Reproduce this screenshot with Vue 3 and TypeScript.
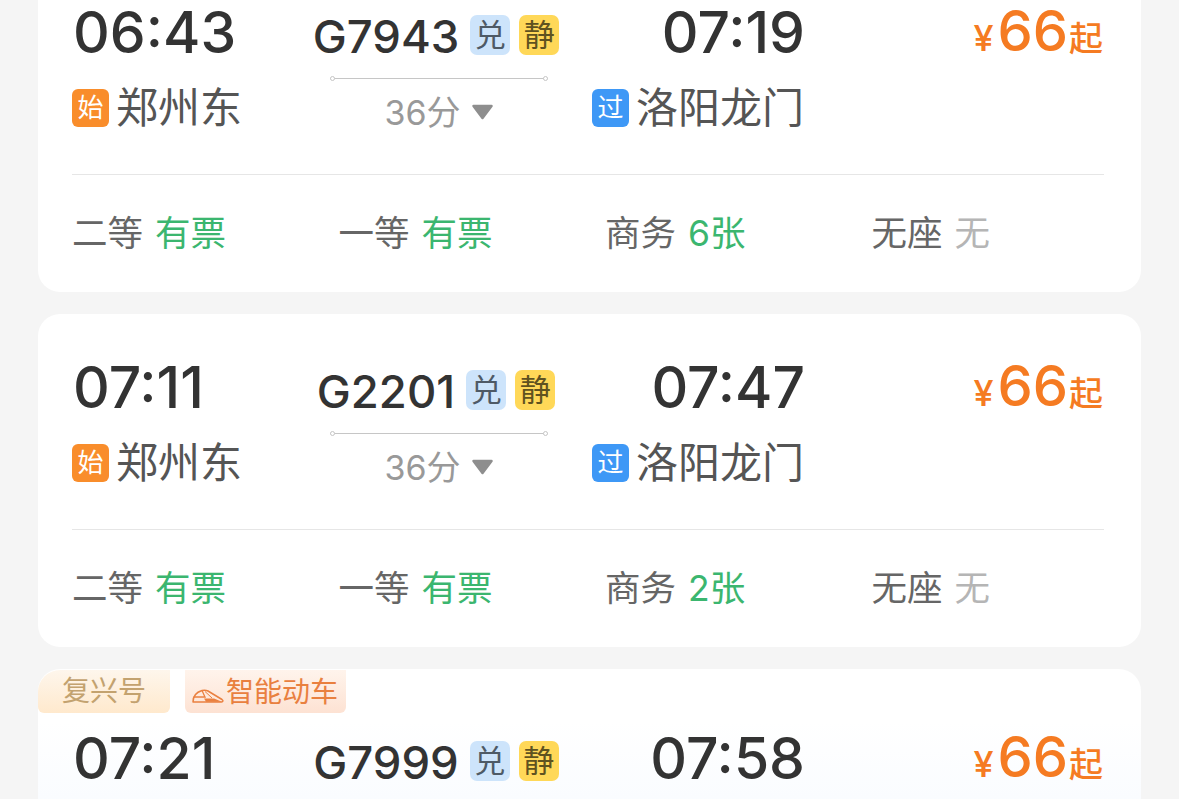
<script setup lang="ts">
interface Seat {
  label: string
  value: string
  none?: boolean
}

interface Train {
  code: string
  depart: string
  arrive: string
  seats: Seat[]
  fuxing?: boolean
}

const seatsWith = (shangwu: string): Seat[] => [
  { label: "二等", value: "有票" },
  { label: "一等", value: "有票" },
  { label: "商务", value: shangwu },
  { label: "无座", value: "无", none: true },
]

// the third card runs past the fold, only its top row is drawn
const trains: Train[] = [
  { code: "G7943", depart: "06:43", arrive: "07:19", seats: seatsWith("6张") },
  { code: "G2201", depart: "07:11", arrive: "07:47", seats: seatsWith("2张") },
  { code: "G7999", depart: "07:21", arrive: "07:58", seats: [], fuxing: true },
]
</script>

<template>
  <div class="page">
    <div class="list">
      <section v-for="t in trains" :key="t.code" class="card" :class="{ 'card--fuxing': t.fuxing }">
        <div v-if="t.fuxing" class="tags">
          <span class="tag-fx">复兴号</span>
          <span class="tag-smart">
            <svg width="32" height="14" viewBox="0 0 32 14" fill="none">
              <path d="M1 13C1 7 5 3 10 1.500C12 1 14 1 16 2L30 10.500C31.500 11.500 31 13 29.500 13Z" stroke="#ea8040" stroke-width="1.500" stroke-linejoin="round" />
              <path d="M1.500 8H13L10 1.500" stroke="#ea8040" stroke-width="1.300" />
              <path d="M13 2.500L20 9" stroke="#ea8040" stroke-width="1" />
              <path d="M12 9.500H22L30 12.800H14Z" fill="#ea8040" />
            </svg>
            智能动车
          </span>
        </div>
        <div class="main">
          <div class="col col-left">
            <div class="time">{{ t.depart }}</div>
            <div v-if="!t.fuxing" class="station">
              <span class="st-tag st-tag--start">始</span>郑州东
            </div>
          </div>
          <div class="col col-mid">
            <div class="train">
              <span class="code">{{ t.code }}</span>
              <span class="badge badge--blue">兑</span>
              <span class="badge badge--yellow">静</span>
            </div>
            <template v-if="!t.fuxing">
              <div class="track"></div>
              <div class="duration">
                36分
                <svg class="caret" width="23" height="16" viewBox="0 0 23 16">
                  <path d="M2.500 2H20.500L11.500 14Z" fill="#8e8e8e" stroke="#8e8e8e" stroke-width="2.500" stroke-linejoin="round" />
                </svg>
              </div>
            </template>
          </div>
          <div class="col col-right">
            <div class="time">{{ t.arrive }}</div>
            <div v-if="!t.fuxing" class="station">
              <span class="st-tag st-tag--pass">过</span>洛阳龙门
            </div>
          </div>
          <div class="price">
            <span class="yen">¥</span><span class="amount">66</span><span class="from">起</span>
          </div>
        </div>
        <div class="seats">
          <div v-for="s in t.seats" :key="s.label" class="seat">
            <span class="seat-label">{{ s.label }}</span>
            <span class="seat-value" :class="{ 'seat-value--none': s.none }">{{ s.value }}</span>
          </div>
        </div>
      </section>
    </div>
  </div>
</template>

<style scoped>
.page {
  height: 799px;
  overflow: hidden;
  background: #f5f5f5;
  font-family: Inter, "Noto Sans CJK SC", sans-serif;
}

.list {
  display: flex;
  flex-direction: column;
  gap: 22px;
  margin: -41px 38px 0;
}

.card {
  height: 333px;
  flex-shrink: 0;
  box-sizing: border-box;
  padding: 0 37px 0 34px;
  background: #fff;
  border-radius: 22px;
}

.card--fuxing {
  position: relative;
  height: 349px;
  padding-top: 16px;
  background: linear-gradient(180deg, #fff 15%, #f8fbff 45%);
}

.tags {
  position: absolute;
  top: 1px;
  left: 0;
  display: flex;
  gap: 15px;
  height: 43px;
  font-size: 28px;
  line-height: 42px;
}

.tag-fx {
  width: 132px;
  text-align: center;
  color: #c3a26f;
  background: linear-gradient(180deg, #fef6ec, #ffe9cd);
  border-radius: 22px 0 6px 6px;
}

.tag-smart {
  display: flex;
  align-items: center;
  gap: 2px;
  width: 161px;
  box-sizing: border-box;
  padding-left: 7px;
  color: #e9803f;
  background: linear-gradient(180deg, #fff4ec, #fde2d3);
  border-radius: 0 0 6px 6px;
}

.tag-smart svg {
  margin-top: 9px;
}

.main {
  display: grid;
  grid-template-columns: 239px 256px 237px 1fr;
  height: 216px;
  padding-top: 44px;
  box-sizing: border-box;
  border-bottom: 1px solid #e6e6e6;
}

.col {
  display: flex;
  flex-direction: column;
}

.col-right {
  align-items: flex-end;
}

.col-mid {
  align-items: center;
}

.time {
  font-size: 57px;
  font-weight: 450;
  line-height: 60px;
  color: #333;
  padding-left: 1px;
}

.col-right .time {
  margin-right: -1px;
}

.station {
  display: flex;
  align-items: center;
  gap: 7px;
  height: 50px;
  margin-top: 20px;
  font-size: 42px;
  line-height: 50px;
  color: #555;
}

.st-tag {
  display: flex;
  align-items: center;
  justify-content: center;
  width: 37px;
  height: 38px;
  border-radius: 6px;
  font-size: 26px;
  line-height: 38px;
  color: #fff;
}

.st-tag--start {
  background: #f98d2b;
}

.st-tag--pass {
  background: #3e98f6;
}

.train {
  display: flex;
  align-items: center;
  gap: 9px;
  height: 44px;
  margin: 10px 6px 0 0;
}

.code {
  font-size: 45.5px;
  font-weight: 450;
  line-height: 44px;
  color: #333;
  margin: 4px 2px 0 0;
}

.badge {
  display: flex;
  align-items: center;
  justify-content: center;
  width: 40px;
  height: 40px;
  border-radius: 7px;
  font-size: 31px;
  line-height: 40px;
}

.badge--blue {
  background: #cde4fb;
  color: #4e5a66;
}

.badge--yellow {
  background: #ffd858;
  color: #5f5220;
}

.track {
  position: relative;
  width: 218px;
  height: 1px;
  margin-top: 21px;
  background: #c6c6c6;
  flex-shrink: 0;
}

.track::before,
.track::after {
  content: "";
  position: absolute;
  top: -2px;
  width: 5px;
  height: 5px;
  box-sizing: border-box;
  border: 1px solid #c6c6c6;
  border-radius: 50%;
  background: #fff;
}

.track::before {
  left: 0;
}

.track::after {
  right: 0;
}

.duration {
  display: flex;
  align-items: center;
  gap: 10px;
  height: 44px;
  margin-top: 12px;
  font-size: 34px;
  line-height: 44px;
  color: #999;
}

.caret {
  margin-top: -3px;
}

.price {
  display: flex;
  justify-content: flex-end;
  align-items: baseline;
  height: 60px;
  margin: -2px 1px 0 0;
  color: #f57b22;
  line-height: 60px;
}

.yen {
  font-size: 36px;
  font-weight: 500;
  margin-right: 4px;
}

.amount {
  font-size: 56px;
  font-weight: 500;
}

.from {
  font-size: 34px;
  font-weight: 500;
  margin-left: 1px;
}

.seats {
  display: grid;
  grid-template-columns: repeat(4, 266.5px);
  align-items: center;
  height: 118px;
}

.seat {
  display: flex;
  gap: 12px;
  font-size: 35.5px;
  line-height: 44px;
}

.seat-label {
  color: #666;
}

.seat-value {
  color: #3bb66f;
}

.seat-value--none {
  color: #b5b5b5;
}
</style>

<style>
html,
body {
  margin: 0;
  background: #f5f5f5;
}
</style>
